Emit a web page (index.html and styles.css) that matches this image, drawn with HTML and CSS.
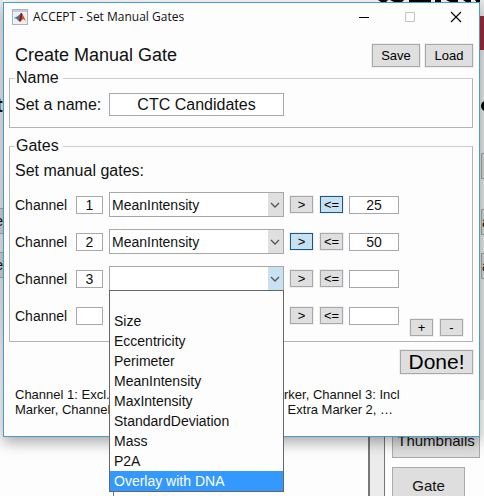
FILE: index.html
```html
<!DOCTYPE html>
<html lang="en">
<head>
<meta charset="utf-8">
<title>ACCEPT - Set Manual Gates</title>
<link rel="stylesheet" href="styles.css">
</head>
<body>
<div class="desktop">
  <div class="behind" aria-hidden="true">
    <svg class="behind-heading" viewBox="0 0 106 8"><path d="M0 0h10l-2 2H3zM12 0h14l-2 2h-8zM31 0h22v2H31zM57 0h6v2h-6zM68 0h12v2h-8zM85 0h8v2h-5zM97 0h9v6h-5z"/></svg>
    <div class="behind-left-strip"></div>
    <div class="behind-right-strip"></div>
    <div class="behind-red"></div>
    <div class="behind-dot"></div>
    <div class="behind-t">t</div>
    <div class="behind-button at-left first">e</div>
    <div class="behind-button at-left second">e</div>
    <div class="behind-button at-right first"></div>
    <div class="behind-button at-right second">a</div>
    <div class="behind-button at-right third">a</div>
    <div class="behind-plot"></div>
    <div class="behind-tools">
      <div class="tool wide">Thumbnails</div>
      <div class="tool">Gate</div>
    </div>
  </div>

  <main class="window">
    <header class="titlebar">
      <svg class="app-icon" viewBox="0 0 16 16">
        <rect x=".5" y=".5" width="15" height="15" fill="#eef2f5" stroke="#a9b4bc"/>
        <path d="M1 1h14v2H1z" fill="#c3d0da"/>
        <path d="M2 9l4-2 3-3 1 4-4 4-1-2z" fill="#3978a8"/>
        <path d="M6 11l2-4 2-3 1 2 3 6-3-2-3 3z" fill="#d9541e"/>
        <path d="M9 4l1 0 0 5-2 4-1-2z" fill="#7c2020"/>
      </svg>
      <h1 class="caption">ACCEPT - Set Manual Gates</h1>
      <button class="sys" type="button" aria-label="Minimize"><svg viewBox="0 0 12 12"><path d="M1 6.500h10" stroke="#000"/></svg></button>
      <button class="sys" type="button" aria-label="Maximize" disabled><svg viewBox="0 0 12 12"><path d="M1.500 1.500h9v9h-9z" stroke="#c4c4c4"/></svg></button>
      <button class="sys" type="button" aria-label="Close"><svg viewBox="0 0 12 12"><path d="M1 1l10 10M11 1L1 11" stroke="#000" stroke-width="1.100"/></svg></button>
    </header>

    <form class="content">
      <div class="heading">
        <h2>Create Manual Gate</h2>
        <button class="btn action" type="button">Save</button>
        <button class="btn action" type="button">Load</button>
      </div>

      <fieldset class="group name-group">
        <legend>Name</legend>
        <div class="name-row">
          <label for="gate-name">Set a name:</label>
          <input class="field name" id="gate-name" type="text" value="CTC Candidates">
        </div>
      </fieldset>

      <fieldset class="group gates-group">
        <legend>Gates</legend>
        <p class="lead">Set manual gates:</p>
        <div class="gates">
          <div class="gate">
            <label for="ch1">Channel</label>
            <input class="field channel" id="ch1" type="text" value="1">
            <div class="combo"><select aria-label="Measure 1"><option>MeanIntensity</option></select><svg class="chevron" viewBox="0 0 16 24"><path d="M4 10l4 4 4-4"/></svg></div>
            <button class="btn op" type="button">&gt;</button>
            <button class="btn op on" type="button">&lt;=</button>
            <input class="field value" type="text" value="25" aria-label="Value 1">
          </div>
          <div class="gate">
            <label for="ch2">Channel</label>
            <input class="field channel" id="ch2" type="text" value="2">
            <div class="combo"><select aria-label="Measure 2"><option>MeanIntensity</option></select><svg class="chevron" viewBox="0 0 16 24"><path d="M4 10l4 4 4-4"/></svg></div>
            <button class="btn op on" type="button">&gt;</button>
            <button class="btn op" type="button">&lt;=</button>
            <input class="field value" type="text" value="50" aria-label="Value 2">
          </div>
          <div class="gate">
            <label for="ch3">Channel</label>
            <input class="field channel" id="ch3" type="text" value="3">
            <div class="combo open">
              <select aria-label="Measure 3"><option></option></select><svg class="chevron" viewBox="0 0 16 24"><path d="M4 10l4 4 4-4"/></svg>
              <ul class="menu" role="listbox" aria-label="Measure 3">
                <li role="option"></li>
                <li role="option">Size</li>
                <li role="option">Eccentricity</li>
                <li role="option">Perimeter</li>
                <li role="option">MeanIntensity</li>
                <li role="option">MaxIntensity</li>
                <li role="option">StandardDeviation</li>
                <li role="option">Mass</li>
                <li role="option">P2A</li>
                <li role="option" class="selected" aria-selected="true">Overlay with DNA</li>
              </ul>
            </div>
            <button class="btn op" type="button">&gt;</button>
            <button class="btn op" type="button">&lt;=</button>
            <input class="field value" type="text" aria-label="Value 3">
          </div>
          <div class="gate">
            <label for="ch4">Channel</label>
            <input class="field channel" id="ch4" type="text">
            <div class="combo"><select aria-label="Measure 4"><option></option></select></div>
            <button class="btn op" type="button">&gt;</button>
            <button class="btn op" type="button">&lt;=</button>
            <input class="field value" type="text" aria-label="Value 4">
          </div>
        </div>
        <div class="rows-edit">
          <button class="btn op" type="button" aria-label="Add gate">+</button>
          <button class="btn op" type="button" aria-label="Remove gate">-</button>
        </div>
      </fieldset>

      <div class="finish"><button class="btn done" type="button">Done!</button></div>
      <div class="hint">
        <p>Channel 1: Excl.<br>Marker, Channel</p>
        <p>rker, Channel 3: Incl<br>&nbsp;Extra Marker 2, …</p>
      </div>
    </form>
  </main>
</div>
</body>
</html>
```

FILE: styles.css
```css
* { box-sizing: border-box; }

body {
  margin: 0;
  font-family: "Liberation Sans", Arial, sans-serif;
  font-size: 14px;
  color: #111;
}

h1, h2, p, ul { margin: 0; padding: 0; font-weight: normal; }

.desktop {
  position: relative;
  min-height: 100vh;
  padding: 2px 4px 0 3px;
  overflow: hidden;
  background: #fdfdfd;
}

/* Application that sits underneath the dialog */
.behind { position: absolute; inset: 0; overflow: hidden; }
.behind > * { position: absolute; }
.behind-left-strip { left: 0; top: 0; width: 3px; height: 380px; background: linear-gradient(#ececec 300px, #fdfdfd); }
.behind-right-strip { right: 0; top: 0; width: 4px; height: 436px; background: #e6e8ea; }
.behind-heading { right: 0; top: 0; width: 106px; height: 8px; }
.behind-red { right: 0; top: 16px; width: 4px; height: 34px; background: #a3283a; }
.behind-dot { right: -6px; top: 101px; width: 9px; height: 10px; border-radius: 50%; background: #000; }
.behind-t { left: -4px; top: 94px; font-size: 20px; font-weight: bold; }
.behind-button { width: 30px; height: 26px; border: 1px solid #aaa; background: #d6d6d6; line-height: 24px; }
.at-left { left: -26px; text-align: right; }
.at-left.first { top: 208px; }
.at-left.second { top: 252px; }
.at-right { right: -27px; }
.at-right.first { top: 153px; }
.at-right.second { top: 209px; }
.at-right.third { top: 253px; }

.behind-plot { left: 113px; right: 114px; top: 400px; bottom: 0; border: solid #777; border-width: 0 2px 0 1px; }
.behind-tools {
  right: 0; top: 400px; bottom: 0; width: 114px;
  padding: 22px 0 0 22px;
  background: linear-gradient(90deg, #ececec 14px, #777 14px, #777 15px, #fdfdfd 15px);
}
.tool {
  width: 73px; height: 36px;
  margin: 0 0 9px;
  border: 1px solid #aaa;
  background: #dedede;
  font-size: 15px; line-height: 36px; text-align: center;
}
.tool.wide { width: 88px; }

/* Dialog */
.window {
  position: relative;
  border: 1px solid #4a9cc9;
  background: #fdfdfd;
  box-shadow: 0 5px 14px rgba(0, 0, 0, .35);
  padding-bottom: 19px;
}

.titlebar { display: flex; align-items: center; height: 27px; padding-left: 8px; }
.app-icon { width: 16px; height: 16px; }
.caption { flex: 1; margin-left: 5px; font-family: "Open Sans", "Noto Sans", sans-serif; font-size: 12px; }
.sys {
  display: flex; align-items: center; justify-content: center;
  width: 46px; height: 27px; padding: 0; border: 0; background: none;
}
.sys svg { width: 12px; height: 12px; fill: none; }

.content { padding: 0 6px 0 5px; }

.btn {
  padding: 0;
  border: 1px solid #a8a8a8;
  background: #dfdfdf;
  box-shadow: 0 0 0 1px #efefef;
  color: #000;
  font: inherit;
}
.field {
  padding: 0;
  border: 1px solid #a8a8ac;
  background: #fff;
  color: #111;
  font: inherit;
  text-align: center;
}

.heading { display: flex; gap: 5px; padding-top: 14px; height: 38px; }
.heading h2 { flex: 1; padding-left: 6px; font-size: 18px; line-height: 22px; }
.action { width: 48px; height: 23px; font-size: 13px; }

.group {
  position: relative;
  min-width: 0;
  margin: 0;
  border: 1px solid #b4b4b4;
  border-top-color: #ccc;
  padding: 0 5px;
}
.group legend { padding: 0 4px 0 1px; font-size: 16px; line-height: 20px; }

.name-group { height: 60px; }
.name-row { display: flex; align-items: center; padding-top: 5px; font-size: 16px; }
.name-row label { width: 94px; }
.name { width: 175px; height: 23px; }

.gates-group { margin-top: 8px; height: 206px; }
.lead { font-size: 16px; line-height: 20px; padding-top: 5px; margin-bottom: 11px; }
.gates { display: grid; gap: 12px; }
.gate { display: flex; align-items: center; height: 25px; }
.gate label { width: 61px; }
.channel { width: 27px; height: 18px; margin-right: 6px; }
.combo { position: relative; display: flex; width: 175px; height: 25px; margin-right: 6px; }
.combo select {
  appearance: none;
  width: 100%;
  padding: 0 18px 0 2px;
  border: 1px solid #a8a8a8;
  border-radius: 0;
  background: linear-gradient(270deg, #dfdfdf 15px, #fff 15px);
  color: #111;
  font: inherit;
}
.combo.open select { background: linear-gradient(270deg, #c9e2f2 15px, #fff 15px); }
.chevron {
  position: absolute; right: 1px; top: 1px; width: 16px; height: 24px;
  fill: none; stroke: #555; stroke-width: 1.3; pointer-events: none;
}
.op { width: 23px; height: 17px; margin-right: 7px; font-size: 13px; line-height: 15px; }
.op.on { border-color: #17598c; background: #c8e1f1; }
.value { width: 50px; height: 18px; }
.gate .value { margin-left: -1px; }

.rows-edit { position: absolute; right: 9px; bottom: 5px; display: flex; gap: 7px; }
.rows-edit .op { margin: 0; }

.menu {
  position: absolute; left: 0; right: 0; top: 24px; z-index: 2;
  border: 1px solid #666;
  background: #fdfdfd;
  list-style: none;
}
.menu li { height: 20px; padding-left: 4px; line-height: 20px; }
.menu .selected { background: #3399ff; color: #fff; }

.finish { display: flex; justify-content: flex-end; margin-top: 8px; }
.done { width: 73px; height: 24px; font-size: 21px; line-height: 22px; }

.hint { display: grid; grid-template-columns: 98px 1fr; column-gap: 171px; margin-top: 13px; padding-left: 6px; font-size: 13px; line-height: 15px; white-space: nowrap; }
```
